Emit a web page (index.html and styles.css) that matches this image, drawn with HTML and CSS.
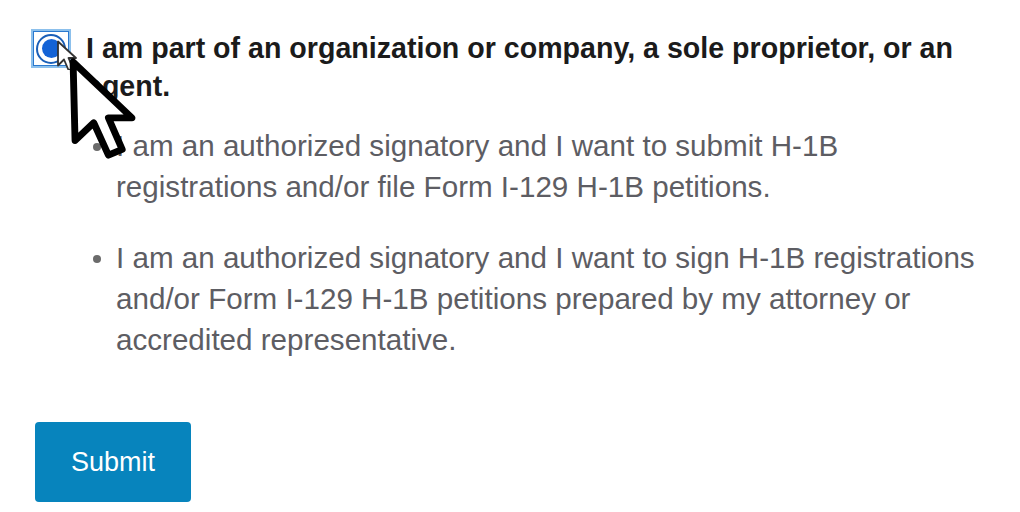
FILE: index.html
```html
<!DOCTYPE html>
<html>
<head>
<meta charset="utf-8">
<link rel="stylesheet" href="styles.css">
</head>
<body>
<div class="page">
  <div class="option">
    <span class="radio"><span class="ring"><span class="dot"></span></span></span>
    <div class="content">
      <div class="label">I am part of an organization or company, a sole proprietor, or an agent.</div>
      <ul class="list">
        <li>I am an authorized signatory and I want to submit H-1B registrations and/or file Form I-129 H-1B petitions.</li>
        <li>I am an authorized signatory and I want to sign H-1B registrations and/or Form I-129 H-1B petitions prepared by my attorney or accredited representative.</li>
      </ul>
    </div>
  </div>
  <button class="submit">Submit</button>
</div>
<svg class="cursor-small" width="24" height="30" viewBox="-1 -1 14 20"><path d="M0,0 L0,16 L4,12 L7,19 L10,18 L7,11 L12,11 Z" fill="#fff" stroke="#333" stroke-width="1.2" stroke-linejoin="round"/></svg>
<svg class="cursor-big" width="74" height="108" viewBox="-1 -1 15 22"><path d="M0,0 L0.4,16 L4.2,12.4 L7.2,19 L10,17.8 L7.2,11.4 L12,11.4 Z" fill="#fff" stroke="#000" stroke-width="1.4" stroke-linejoin="round"/></svg>
</body>
</html>
```
FILE: styles.css
```css
html, body { margin: 0; padding: 0; background: #fff; }
body { font-family: "Liberation Sans", Arial, sans-serif; width: 1020px; height: 512px; overflow: hidden; position: relative; }
.page { padding: 29px 0 0 31px; }
.option { display: flex; align-items: flex-start; gap: 15px; }
.radio { width: 36px; height: 35px; border: 2px solid #8cc0ec; box-shadow: inset 0 0 0 1px #2a79cf; display: flex; align-items: center; justify-content: center; flex-shrink: 0; background: #fff; }
.ring { width: 30px; height: 30px; border-radius: 50%; border: 2px solid #1a5fb8; box-sizing: border-box; display: flex; align-items: center; justify-content: center; background: #fff; }
.dot { width: 19px; height: 19px; border-radius: 50%; background: #1463d6; }
.content { flex: 1; }
.label { font-weight: bold; font-size: 28.6px; line-height: 38px; color: #1b1b1b; }
.list { margin: 20px 0 0 0; padding: 0 0 0 30px; color: #5d5d63; font-size: 29.6px; line-height: 41px; list-style: none; }
.list li { position: relative; margin-bottom: 30px; padding-right: 30px; }
.list li::before { content: ""; position: absolute; left: -23px; top: 18px; width: 8px; height: 8px; border-radius: 50%; background: #6b6b6b; }
.submit { display: block; margin-top: 32px; margin-left: 4px; width: 156px; height: 80px; background: #0784bd; color: #fff; border: none; border-radius: 4px; font-family: "Liberation Sans", Arial, sans-serif; font-size: 27px; }
.cursor-small { position: absolute; left: 55px; top: 40px; }
.cursor-big { position: absolute; left: 68px; top: 57px; }
```
